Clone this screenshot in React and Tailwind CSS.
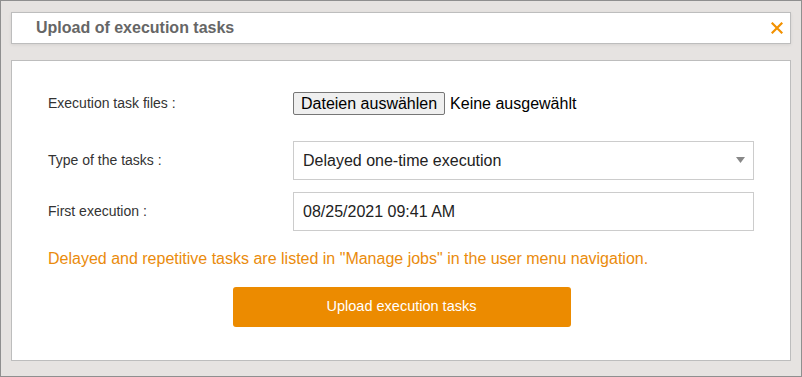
import { useState } from 'react';

const UploadTasks = () => {
  const [type, setType] = useState('delayed');
  const [firstRun, setFirstRun] = useState('08/25/2021 09:41 AM');

  return (
    <div className="w-[802px] h-[377px] bg-[#e6e3e1] border border-[#8f8f8f] pl-[10px] pr-[10px] pt-[11px] font-['Liberation_Sans',Arial,sans-serif]">
      {/* Header */}
      <div className="h-[32px] bg-white border border-[#bdbdbd] shadow-[0_1px_3px_rgba(0,0,0,0.08)] flex items-center justify-between pl-[24px] pr-[7px]">
        <h2 className="text-[16px] font-bold text-[#666666]">Upload of execution tasks</h2>
        <button type="button" className="text-[#f29100]" aria-label="Close">
          <svg width="12" height="12" viewBox="0 0 12 12">
            <path d="M1.5 1.5 L10.5 10.5 M10.5 1.5 L1.5 10.5" stroke="currentColor" strokeWidth="2.2" strokeLinecap="square" />
          </svg>
        </button>
      </div>

      {/* Body */}
      <div className="mt-[16px] h-[301px] bg-white border border-[#bdbdbd] pl-[36px] pr-[36px] pt-[31px]">
        <div className="flex items-center h-[23px]">
          <label className="w-[245px] text-[14px] text-[#333333]">Execution task files :</label>
          <div className="flex items-center">
            <span className="h-[23px] px-[7px] flex items-center bg-[#efefef] border border-[#767676] rounded-[2px] text-[16px] text-black">
              Dateien auswählen
            </span>
            <span className="ml-[5px] text-[16px] text-black">Keine ausgewählt</span>
          </div>
        </div>

        <div className="flex items-center mt-[26px]">
          <label className="w-[245px] text-[14px] text-[#333333]">Type of the tasks :</label>
          <div className="relative w-[461px] h-[39px]">
            <select
              value={type}
              onChange={(e) => setType(e.target.value)}
              className="appearance-none w-full h-full border border-[#cccccc] bg-white pl-[9px] text-[16px] text-[#222222] outline-none"
            >
              <option value="delayed">Delayed one-time execution</option>
              <option value="repeat">Repetitive execution</option>
            </select>
            <svg className="absolute right-[9px] top-[16px] pointer-events-none" width="9" height="6" viewBox="0 0 9 6">
              <path d="M0 0 H9 L4.5 6 Z" fill="#888888" />
            </svg>
          </div>
        </div>

        <div className="flex items-center mt-[12px]">
          <label className="w-[245px] text-[14px] text-[#333333]">First execution :</label>
          <input
            value={firstRun}
            onChange={(e) => setFirstRun(e.target.value)}
            className="w-[461px] h-[39px] border border-[#cccccc] bg-white pl-[9px] text-[16px] text-[#222222] outline-none"
          />
        </div>

        <p className="mt-[18px] text-[16px] leading-[19px] text-[#ea8b0c]">
          Delayed and repetitive tasks are listed in "Manage jobs" in the user menu navigation.
        </p>

        <div className="flex justify-center mt-[19px] pl-[1px]">
          <button
            type="button"
            className="w-[338px] h-[40px] bg-[#ec8b00] rounded-[3px] text-white text-[14.5px]"
          >
            Upload execution tasks
          </button>
        </div>
      </div>
    </div>
  );
};

export default UploadTasks;
